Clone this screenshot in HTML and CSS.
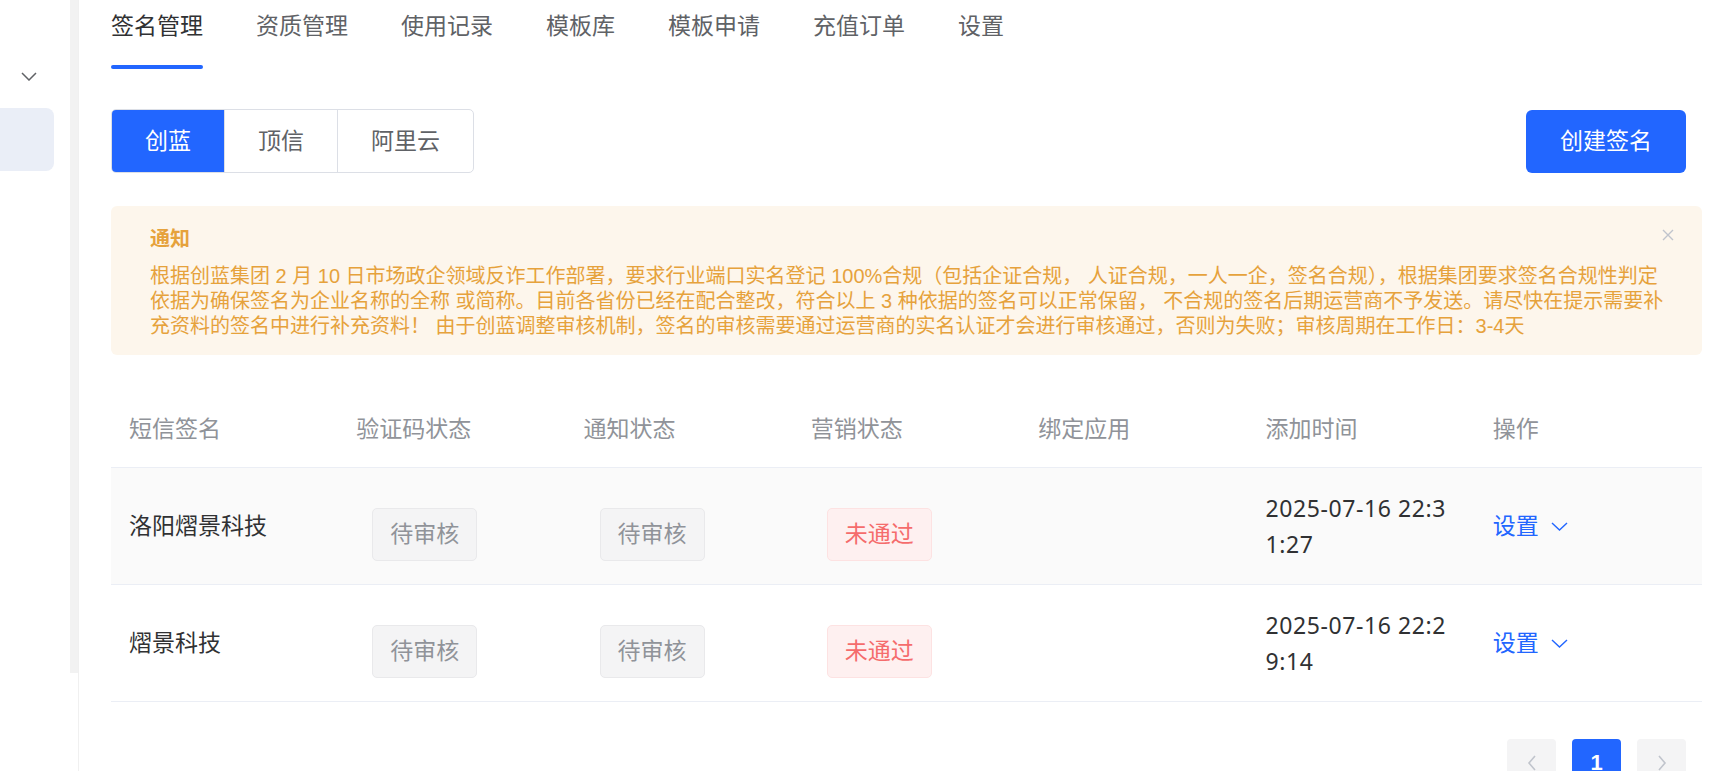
FILE: index.html
```html
<!DOCTYPE html>
<html lang="zh-CN">
<head>
    <meta charset="UTF-8">
    <title>签名管理</title>
    <link rel="stylesheet" href="styles.css">
</head>
<body>
<div class="layout">
    <aside class="sidebar">
        <div class="menu-toggle">
            <svg width="16" height="9" viewBox="0 0 16 9"><path d="M1 1 L8 8 L15 1" fill="none" stroke="#606266" stroke-width="1.5"/></svg>
        </div>
        <div class="menu-item active"></div>
    </aside>
    <div class="sidebar-track"></div>

    <main class="main">
        <nav class="tabs">
            <a class="tab active">签名管理</a>
            <a class="tab">资质管理</a>
            <a class="tab">使用记录</a>
            <a class="tab">模板库</a>
            <a class="tab">模板申请</a>
            <a class="tab">充值订单</a>
            <a class="tab">设置</a>
        </nav>

        <div class="toolbar">
            <div class="seg">
                <span class="seg-item active">创蓝</span>
                <span class="seg-item">顶信</span>
                <span class="seg-item">阿里云</span>
            </div>
            <button class="btn-primary" type="button">创建签名</button>
        </div>

        <div class="notice">
            <div class="notice-title">通知</div>
            <div class="notice-text">根据创蓝集团 2 月 10 日市场政企领域反诈工作部署，要求行业端口实名登记 100%合规（包括企证合规， 人证合规，一人一企，签名合规），根据集团要求签名合规性判定依据为确保签名为企业名称的全称 或简称。目前各省份已经在配合整改，符合以上 3 种依据的签名可以正常保留， 不合规的签名后期运营商不予发送。请尽快在提示需要补充资料的签名中进行补充资料！ 由于创蓝调整审核机制，签名的审核需要通过运营商的实名认证才会进行审核通过，否则为失败；审核周期在工作日：3-4天</div>
            <svg class="notice-close" width="12" height="12" viewBox="0 0 12 12"><path d="M1 1 L11 11 M11 1 L1 11" fill="none" stroke="#c0c4cc" stroke-width="1.4"/></svg>
        </div>

        <table class="sign-table">
            <thead>
            <tr>
                <th>短信签名</th>
                <th>验证码状态</th>
                <th>通知状态</th>
                <th>营销状态</th>
                <th>绑定应用</th>
                <th>添加时间</th>
                <th>操作</th>
            </tr>
            </thead>
            <tbody>
            <tr class="hover">
                <td>洛阳熠景科技</td>
                <td><span class="tag">待审核</span></td>
                <td><span class="tag">待审核</span></td>
                <td><span class="tag tag-danger">未通过</span></td>
                <td></td>
                <td class="time">2025-07-16 22:31:27</td>
                <td>
                    <a class="op-link">设置
                        <svg width="17" height="9" viewBox="0 0 17 9"><path d="M1 1 L8.5 8 L16 1" fill="none" stroke="#2266ff" stroke-width="1.4"/></svg>
                    </a>
                </td>
            </tr>
            <tr>
                <td>熠景科技</td>
                <td><span class="tag">待审核</span></td>
                <td><span class="tag">待审核</span></td>
                <td><span class="tag tag-danger">未通过</span></td>
                <td></td>
                <td class="time">2025-07-16 22:29:14</td>
                <td>
                    <a class="op-link">设置
                        <svg width="17" height="9" viewBox="0 0 17 9"><path d="M1 1 L8.5 8 L16 1" fill="none" stroke="#2266ff" stroke-width="1.4"/></svg>
                    </a>
                </td>
            </tr>
            </tbody>
        </table>

        <div class="pager">
            <span class="page-btn">
                <svg width="10" height="16" viewBox="0 0 10 16"><path d="M8 1 L2 8 L8 15" fill="none" stroke="#c0c4cc" stroke-width="1.6"/></svg>
            </span>
            <span class="page-btn current">1</span>
            <span class="page-btn">
                <svg width="10" height="16" viewBox="0 0 10 16"><path d="M2 1 L8 8 L2 15" fill="none" stroke="#c0c4cc" stroke-width="1.6"/></svg>
            </span>
        </div>
    </main>
</div>
</body>
</html>
```

FILE: styles.css
```css
body {
    margin: 0;
    font-family: "Liberation Sans", "Noto Sans CJK SC", sans-serif;
    color: #303133;
    background: #ffffff;
}

.layout {
    display: flex;
    min-height: 100vh;
}

/* 左侧菜单 */
.sidebar {
    width: 70px;
    flex-shrink: 0;
    padding-top: 72px;
    box-sizing: border-box;
}

.menu-toggle {
    padding-left: 21px;
    height: 9px;
}

.menu-toggle svg {
    display: block;
}

.menu-item {
    width: 54px;
    height: 63px;
    margin-top: 27px;
    border-radius: 0 8px 8px 0;
}

.menu-item.active {
    background: #eaeef7;
}

.sidebar-track {
    width: 8px;
    height: 673px;
    flex-shrink: 0;
    background: #f2f2f2;
}

/* 主体 */
.main {
    flex: 1;
    min-width: 0;
    border-left: 1px solid #f0f0f0;
    padding: 0 9px 0 32px;
}

.tabs {
    display: flex;
    align-items: flex-start;
}

.tab {
    font-size: 23px;
    line-height: 52px;
    color: #606266;
    margin-right: 53px;
    cursor: pointer;
}

.tab.active {
    color: #303133;
}

.tab.active::after {
    content: "";
    display: block;
    height: 4px;
    margin-top: 13px;
    border-radius: 2px;
    background: #2266ff;
}

.toolbar {
    margin-top: 40px;
    padding-right: 16px;
    display: flex;
    justify-content: space-between;
    align-items: center;
}

.seg {
    display: flex;
    border: 1px solid #dcdfe6;
    border-radius: 5px;
    overflow: hidden;
}

.seg-item {
    font-size: 23px;
    line-height: 62px;
    padding: 0 33px;
    color: #606266;
    border-left: 1px solid #dcdfe6;
    cursor: pointer;
}

.seg-item:first-child {
    border-left: none;
}

.seg-item.active {
    background: #2266ff;
    color: #ffffff;
}

.btn-primary {
    font-family: inherit;
    font-size: 23px;
    line-height: 63px;
    padding: 0 34px;
    color: #ffffff;
    background: #2266ff;
    border: none;
    border-radius: 6px;
    cursor: pointer;
}

/* 通知 */
.notice {
    position: relative;
    margin-top: 33px;
    padding: 21px 27px 16px 39px;
    border-radius: 6px;
    background: #fdf6ec;
    color: #e6a23c;
}

.notice-title {
    font-size: 20px;
    font-weight: bold;
    line-height: 25px;
    margin-bottom: 12px;
}

.notice-text {
    font-size: 20px;
    line-height: 25px;
}

.notice-close {
    position: absolute;
    top: 23px;
    right: 28px;
}

/* 表格 */
.sign-table {
    margin-top: 36px;
    width: 100%;
    border-collapse: collapse;
    table-layout: fixed;
    font-size: 23px;
    line-height: 36px;
}

.sign-table th {
    text-align: left;
    font-weight: normal;
    color: #909399;
    padding: 20px 18px;
    border-bottom: 1px solid #ebeef5;
}

.sign-table td {
    padding: 22px 18px;
    border-bottom: 1px solid #ebeef5;
    vertical-align: middle;
    word-break: break-all;
    color: #303133;
}

.sign-table td.time {
    font-family: "Noto Sans", "Noto Sans CJK SC", sans-serif;
    letter-spacing: 0.6px;
}

.sign-table tr.hover td {
    background: #fafafa;
}

.tag {
    display: inline-block;
    vertical-align: top;
    margin: 16px 0 0 16px;
    padding: 0 17px;
    line-height: 51px;
    border: 1px solid #e9e9eb;
    border-radius: 5px;
    background: #f4f4f5;
    color: #909399;
}

.tag-danger {
    background: #fef0f0;
    border-color: #fde2e2;
    color: #f56c6c;
}

.op-link {
    display: inline-flex;
    align-items: center;
    gap: 12px;
    color: #2266ff;
    cursor: pointer;
}

/* 分页 */
.pager {
    margin-top: 37px;
    padding-right: 16px;
    display: flex;
    justify-content: flex-end;
    gap: 16px;
}

.page-btn {
    width: 49px;
    height: 48px;
    border-radius: 4px;
    background: #f4f4f5;
    display: flex;
    align-items: center;
    justify-content: center;
}

.page-btn.current {
    background: #2266ff;
    color: #ffffff;
    font-size: 22px;
    font-weight: bold;
}
```
